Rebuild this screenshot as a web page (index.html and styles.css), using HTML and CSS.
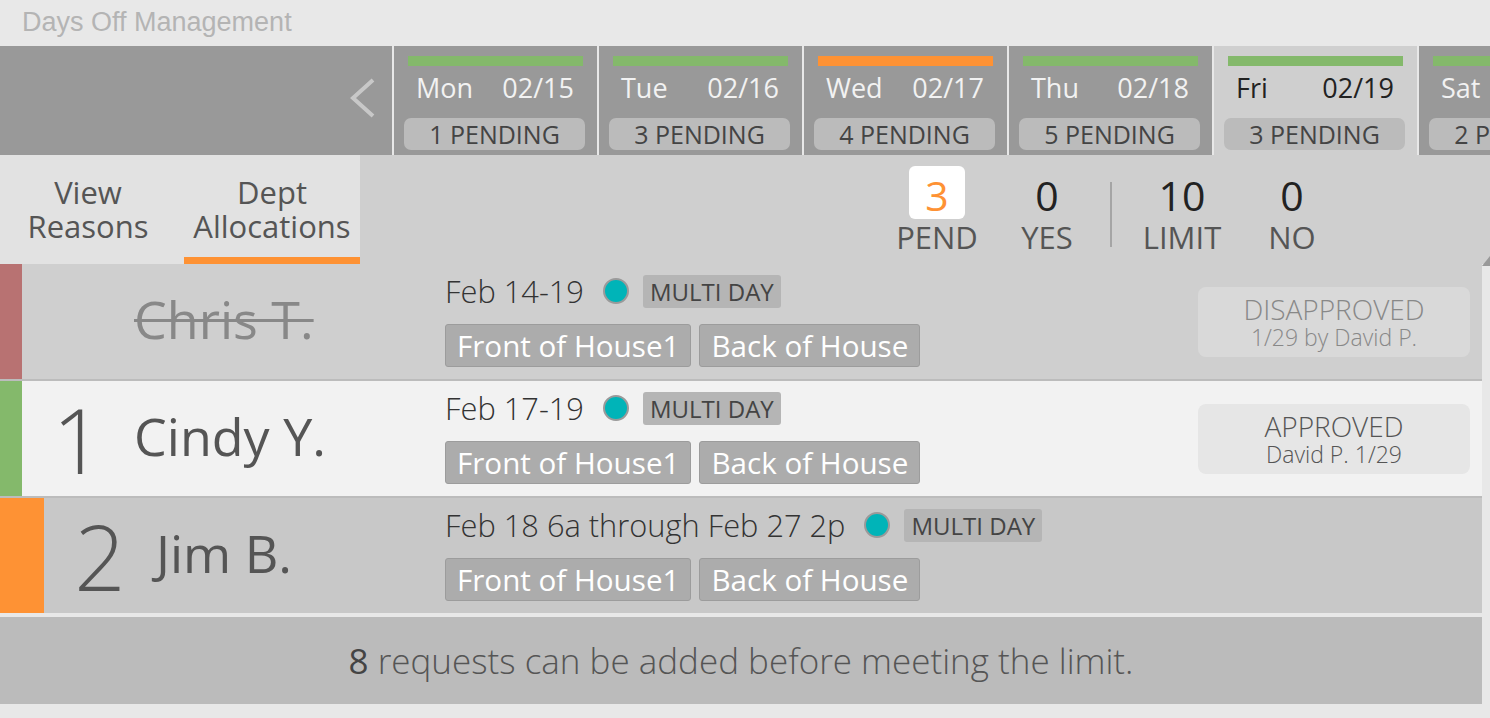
FILE: index.html
```html
<!DOCTYPE html>
<html lang="en">
<head>
    <meta charset="UTF-8">
    <title>Days Off Management</title>
    <link rel="stylesheet" href="styles.css">
</head>
<body>
    <header class="topbar">Days Off Management</header>

    <nav class="days">
        <div class="days-nav">
            <svg width="30" height="44" viewBox="0 0 30 44">
                <polyline points="25,4 5,22 25,40" fill="none" stroke="#c8c8c8" stroke-width="4"/>
            </svg>
        </div>
        <div class="day">
            <div class="day-bar green"></div>
            <div class="day-head"><span>Mon</span><span>02/15</span></div>
            <div class="day-pill">1 PENDING</div>
        </div>
        <div class="day">
            <div class="day-bar green"></div>
            <div class="day-head"><span>Tue</span><span>02/16</span></div>
            <div class="day-pill">3 PENDING</div>
        </div>
        <div class="day">
            <div class="day-bar orange"></div>
            <div class="day-head"><span>Wed</span><span>02/17</span></div>
            <div class="day-pill">4 PENDING</div>
        </div>
        <div class="day">
            <div class="day-bar green"></div>
            <div class="day-head"><span>Thu</span><span>02/18</span></div>
            <div class="day-pill">5 PENDING</div>
        </div>
        <div class="day active">
            <div class="day-bar green"></div>
            <div class="day-head"><span>Fri</span><span>02/19</span></div>
            <div class="day-pill">3 PENDING</div>
        </div>
        <div class="day">
            <div class="day-bar green"></div>
            <div class="day-head"><span>Sat</span><span>02/20</span></div>
            <div class="day-pill">2 PENDING</div>
        </div>
    </nav>

    <section class="summary">
        <div class="tabs">
            <div class="tab">View<br>Reasons</div>
            <div class="tab active">Dept<br>Allocations</div>
        </div>
        <div class="stats">
            <div class="stat">
                <div class="stat-num pend">3</div>
                <div class="stat-label">PEND</div>
            </div>
            <div class="stat">
                <div class="stat-num">0</div>
                <div class="stat-label">YES</div>
            </div>
            <div class="stat-divider"></div>
            <div class="stat">
                <div class="stat-num">10</div>
                <div class="stat-label">LIMIT</div>
            </div>
            <div class="stat">
                <div class="stat-num">0</div>
                <div class="stat-label">NO</div>
            </div>
        </div>
        <span class="corner"></span>
    </section>

    <div class="requests">
        <div class="request denied">
            <div class="who">
                <span class="stripe red"></span>
                <span class="rank"></span>
                <span class="name">Chris T.</span>
            </div>
            <div class="info">
                <div class="info-top">
                    <span class="dates">Feb 14-19</span>
                    <span class="dot"></span>
                    <span class="kind">MULTI DAY</span>
                </div>
                <div class="depts">
                    <span class="dept">Front of House1</span>
                    <span class="dept">Back of House</span>
                </div>
            </div>
            <div class="status">
                <div class="status-title">DISAPPROVED</div>
                <div class="status-by">1/29 by David P.</div>
            </div>
        </div>

        <div class="request approved">
            <div class="who">
                <span class="stripe green"></span>
                <span class="rank">1</span>
                <span class="name">Cindy Y.</span>
            </div>
            <div class="info">
                <div class="info-top">
                    <span class="dates">Feb 17-19</span>
                    <span class="dot"></span>
                    <span class="kind">MULTI DAY</span>
                </div>
                <div class="depts">
                    <span class="dept">Front of House1</span>
                    <span class="dept">Back of House</span>
                </div>
            </div>
            <div class="status">
                <div class="status-title">APPROVED</div>
                <div class="status-by">David P. 1/29</div>
            </div>
        </div>

        <div class="request pending">
            <div class="who">
                <span class="stripe orange wide"></span>
                <span class="rank">2</span>
                <span class="name">Jim B.</span>
            </div>
            <div class="info">
                <div class="info-top">
                    <span class="dates">Feb 18 6a through Feb 27 2p</span>
                    <span class="dot"></span>
                    <span class="kind">MULTI DAY</span>
                </div>
                <div class="depts">
                    <span class="dept">Front of House1</span>
                    <span class="dept">Back of House</span>
                </div>
            </div>
        </div>
    </div>

    <div class="footer-note"><b>8</b> requests can be added before meeting the limit.</div>
</body>
</html>
```

FILE: styles.css
```css
body {
    margin: 0;
    background-color: #e8e8e8;
    font-family: "Open Sans", sans-serif;
    color: #555;
    overflow: hidden;
}

/* title bar */
.topbar {
    height: 46px;
    line-height: 44px;
    padding-left: 22px;
    font-family: "Liberation Sans", Arial, sans-serif;
    font-size: 27px;
    color: #b4b4b4;
}

/* day strip */
.days {
    display: flex;
    height: 109px;
    background-color: #999;
    overflow: hidden;
}
.days-nav {
    flex: 0 0 392px;
    display: flex;
    justify-content: flex-end;
    align-items: flex-start;
    padding: 30px 14px 0 0;
    box-sizing: border-box;
}
.day {
    flex: 0 0 205px;
    box-sizing: border-box;
    border-left: 2px solid #e8e8e8;
    padding: 10px 12px 0 10px;
    color: #f2f2f2;
}
.day.active {
    background-color: #cfcfcf;
    color: #222;
}
.day-bar {
    height: 10px;
    margin: 0 2px 0 4px;
}
.green { background-color: #84b96b; }
.orange { background-color: #fe9234; }
.red { background-color: #b87272; }
.day-head {
    display: flex;
    justify-content: space-between;
    margin-top: 6px;
    padding: 0 11px 0 12px;
    font-size: 27px;
    line-height: 32px;
}
.day-pill {
    margin-top: 14px;
    height: 32px;
    line-height: 33px;
    border-radius: 7px;
    background-color: #bbb;
    color: #444;
    font-size: 25px;
    text-align: center;
    white-space: nowrap;
}

/* tabs + stats */
.summary {
    position: relative;
    display: flex;
    height: 109px;
    background-color: #cfcfcf;
}
.tabs {
    display: flex;
    width: 360px;
    background-color: #e2e2e2;
}
.tab {
    width: 176px;
    box-sizing: border-box;
    padding-top: 20px;
    text-align: center;
    font-size: 31px;
    line-height: 34px;
    color: #555;
}
.tab.active {
    margin-left: 8px;
    border-bottom: 7px solid #fe9234;
}
.stats {
    flex: 1;
    display: flex;
    justify-content: flex-end;
    align-items: flex-start;
    padding: 11px 143px 0 0;
}
.stat {
    width: 110px;
    text-align: center;
}
.stat-num {
    display: inline-block;
    min-width: 56px;
    height: 53px;
    line-height: 58px;
    font-size: 41px;
    color: #222;
}
.stat-num.pend {
    background-color: #fff;
    border-radius: 6px;
    color: #fe9234;
}
.stat-label {
    font-size: 31px;
    line-height: 36px;
    color: #555;
}
.stat-divider {
    width: 2px;
    height: 65px;
    margin: 16px 15px 0 8px;
    background-color: #a5a5a5;
}
.corner {
    position: absolute;
    right: 0;
    bottom: -2px;
    width: 0;
    height: 0;
    border-left: 8px solid transparent;
    border-bottom: 10px solid #999;
}

/* request rows */
.requests {
    width: 1482px;
}
.request {
    display: flex;
    height: 115px;
    border-bottom: 2px solid #bcbcbc;
    background-color: #cfcfcf;
}
.request.approved { background-color: #f2f2f2; }
.request.pending {
    background-color: #c8c8c8;
    border-bottom: none;
}
.who {
    flex: 0 0 445px;
    display: flex;
    align-items: center;
}
.stripe {
    width: 22px;
    align-self: stretch;
}
.stripe.wide { width: 44px; }
.rank {
    width: 80px;
    margin: 0 16px;
    text-align: center;
    font-size: 90px;
    font-weight: 300;
    line-height: 100px;
    color: #555;
}
.name {
    font-size: 52px;
    color: #555;
    padding-bottom: 6px;
}
.denied .name {
    color: #888;
    text-decoration: line-through;
    text-decoration-thickness: 3px;
}
.info {
    flex: 1;
    padding-top: 10px;
}
.info-top {
    display: flex;
    align-items: center;
    height: 34px;
}
.dates {
    font-size: 30.8px;
    font-weight: 300;
    color: #333;
    white-space: nowrap;
}
.dot {
    width: 22px;
    height: 22px;
    margin: 0 14px 0 19px;
    border: 2px solid #9a9a9a;
    border-radius: 50%;
    background-color: #00b4b8;
}
.kind {
    padding: 0 7px;
    height: 33px;
    line-height: 34px;
    border-radius: 3px;
    background-color: #b5b5b5;
    color: #444;
    font-size: 24px;
}
.depts {
    display: flex;
    gap: 8px;
    margin-top: 16px;
}
.dept {
    height: 41px;
    line-height: 41px;
    padding: 0 11px;
    border: 1px solid #9c9c9c;
    border-radius: 3px;
    background-color: #acacac;
    color: #fff;
    font-size: 29.6px;
}
.status {
    align-self: center;
    width: 272px;
    height: 70px;
    margin-right: 12px;
    border-radius: 8px;
    background-color: #d9d9d9;
    text-align: center;
    color: #888;
    font-weight: 300;
    display: flex;
    flex-direction: column;
    justify-content: center;
}
.approved .status {
    background-color: #e6e6e6;
    color: #555;
}
.status-title {
    font-size: 28px;
    line-height: 30px;
}
.status-by {
    font-size: 23px;
    line-height: 26px;
}

/* footer */
.footer-note {
    width: 1482px;
    height: 87px;
    margin-top: 4px;
    background-color: #bbb;
    line-height: 88px;
    text-align: center;
    font-size: 35px;
    font-weight: 300;
    color: #555;
}
.footer-note b {
    font-weight: 400;
    color: #444;
}
```
